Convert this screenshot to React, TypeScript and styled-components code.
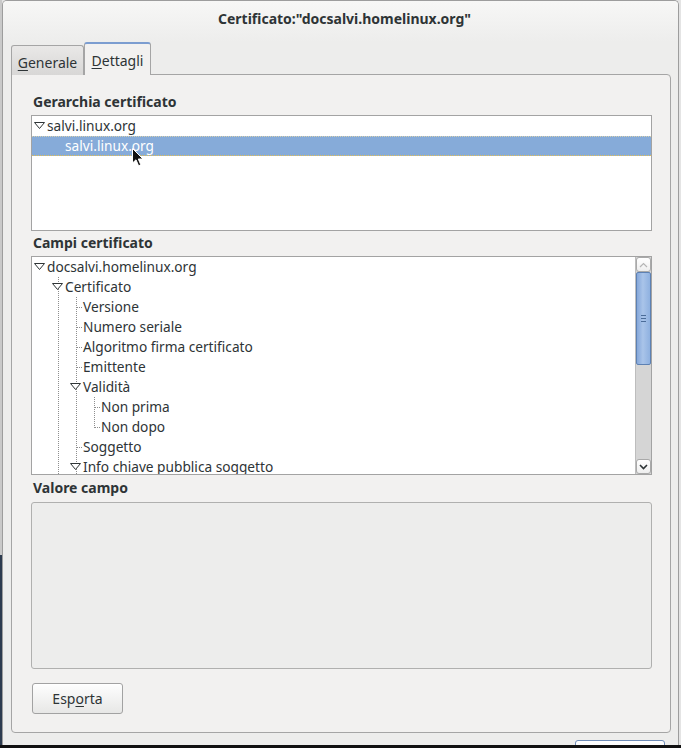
import React from 'react'
import styled, { createGlobalStyle, css } from 'styled-components'

interface TreeNode {
  label: string
  depth: number
  expandable?: boolean
  selected?: boolean
  // for each ancestor cell: does a sibling line run through it
  guides: boolean[]
  // own connector: none (top level), full (more siblings below), half (last child)
  own: 'none' | 'full' | 'half'
}

const hierarchy: TreeNode[] = [
  { label: 'salvi.linux.org', depth: 0, expandable: true, guides: [], own: 'none' },
  { label: 'salvi.linux.org', depth: 1, selected: true, guides: [false], own: 'half' },
]

const fields: TreeNode[] = [
  { label: 'docsalvi.homelinux.org', depth: 0, expandable: true, guides: [], own: 'none' },
  { label: 'Certificato', depth: 1, expandable: true, guides: [false], own: 'full' },
  { label: 'Versione', depth: 2, guides: [false, true], own: 'full' },
  { label: 'Numero seriale', depth: 2, guides: [false, true], own: 'full' },
  { label: 'Algoritmo firma certificato', depth: 2, guides: [false, true], own: 'full' },
  { label: 'Emittente', depth: 2, guides: [false, true], own: 'full' },
  { label: 'Validità', depth: 2, expandable: true, guides: [false, true], own: 'full' },
  { label: 'Non prima', depth: 3, guides: [false, true, true], own: 'full' },
  { label: 'Non dopo', depth: 3, guides: [false, true, true], own: 'half' },
  { label: 'Soggetto', depth: 2, guides: [false, true], own: 'full' },
  { label: 'Info chiave pubblica soggetto', depth: 2, expandable: true, guides: [false, true], own: 'full' },
]

export default function App(): JSX.Element {
  return (
    <Screen>
      <GlobalStyle />
      <Window>
        <TitleBar>Certificato:"docsalvi.homelinux.org"</TitleBar>
        <Content>
          <TabStrip>
            <Tab $width={73}>
              <U>G</U>enerale
            </Tab>
            <Tab $width={67} $active>
              <U>D</U>ettagli
            </Tab>
          </TabStrip>
          <Panel>
            <SectionLabel>Gerarchia certificato</SectionLabel>
            <TreeFrame $height={116}>
              <TreeBody>
                {hierarchy.map((node, i) => (
                  <TreeRow key={`h-${i}`} node={node} lines={false} />
                ))}
              </TreeBody>
              <Pointer viewBox='0 0 12 19' width='12' height='19'>
                <path d='M0.5 0.5 L0.5 15 L4 11.8 L6.6 17.8 L8.8 16.8 L6.3 11 L11 11 Z' fill='#111' stroke='#fff' strokeWidth='1' />
              </Pointer>
            </TreeFrame>

            <SectionLabel $top={4}>Campi certificato</SectionLabel>
            <TreeFrame $height={219}>
              <TreeBody>
                {fields.map((node, i) => (
                  <TreeRow key={`f-${i}`} node={node} lines />
                ))}
              </TreeBody>
              <Scrollbar>
                <StepButton>
                  <svg width='9' height='6' viewBox='0 0 9 6'>
                    <path d='M1 5 L4.5 1.5 L8 5' fill='none' stroke='#b5b5b5' strokeWidth='1.2' />
                  </svg>
                </StepButton>
                <Thumb>
                  <Grip />
                  <Grip />
                  <Grip />
                </Thumb>
                <Trough />
                <StepButton>
                  <svg width='9' height='6' viewBox='0 0 9 6'>
                    <path d='M1 1 L4.5 4.5 L8 1' fill='none' stroke='#2e3436' strokeWidth='1.6' />
                  </svg>
                </StepButton>
              </Scrollbar>
            </TreeFrame>

            <SectionLabel $top={5} $bottom={6}>
              Valore campo
            </SectionLabel>
            <ValueBox />

            <ExportButton>
              Esp<U>o</U>rta
            </ExportButton>
          </Panel>
          <ActionArea>
            <CloseButton>Chiudi</CloseButton>
          </ActionArea>
        </Content>
      </Window>
      <ScreenEdge />
    </Screen>
  )
}

function TreeRow({ node, lines }: { node: TreeNode; lines: boolean }): JSX.Element {
  return (
    <Row $selected={node.selected}>
      {node.guides.map((on, i) => (
        <GuideCell key={i} width='18' height='20' viewBox='0 0 18 20'>
          {lines && on && <DotLine x1='8.5' y1='0' x2='8.5' y2='20' />}
        </GuideCell>
      ))}
      <GuideCell width='15' height='20' viewBox='0 0 15 20'>
        {lines && node.own !== 'none' && <DotLine x1='8.5' y1='0' x2='8.5' y2={node.own === 'full' ? '20' : '10.5'} />}
        {lines && node.own !== 'none' && !node.expandable && <DotLine x1='8.5' y1='10.5' x2='15' y2='10.5' />}
        {node.expandable && (
          <polygon points='2.5,6.5 12.5,6.5 7.5,12.5' fill='#fff' stroke='#2e3436' strokeWidth='1' strokeLinejoin='miter' />
        )}
      </GuideCell>
      <RowLabel>{node.label}</RowLabel>
    </Row>
  )
}

const GlobalStyle = createGlobalStyle`
  html, body {
    margin: 0;
    padding: 0;
  }
  body {
    font-family: 'Noto Sans', 'DejaVu Sans', sans-serif;
    font-size: 13.7px;
    color: #2e3436;
  }
`

const Screen = styled.div`
  width: 681px;
  height: 748px;
  overflow: hidden;
  display: flex;
  flex-direction: column;
  background:
    linear-gradient(to bottom, #c9c9c9 0, #c9c9c9 555px, #2d3b4f 555px) left top / 2px 100% no-repeat,
    #e4e4e4;
`

const Window = styled.div`
  flex: 1;
  min-height: 0;
  margin: 0 2px;
  border: 1px solid #9d9d9d;
  border-bottom: none;
  border-radius: 5px 5px 0 0;
  background: #ededec;
  display: flex;
  flex-direction: column;
  overflow: hidden;
`

const TitleBar = styled.div`
  height: 41px;
  flex-shrink: 0;
  box-sizing: border-box;
  padding: 0 0 6px 8px;
  display: flex;
  align-items: center;
  justify-content: center;
  background: linear-gradient(#f7f7f6, #ededec);
  font-weight: bold;
  font-size: 14px;
`

const Content = styled.div`
  display: flex;
  flex-direction: column;
  padding: 0 7px 0 8px;
`

const TabStrip = styled.div`
  height: 33px;
  margin-bottom: -1px;
  display: flex;
  align-items: flex-end;
`

const Tab = styled.div<{ $active?: boolean; $width: number }>`
  position: relative;
  z-index: ${p => (p.$active ? 1 : 0)};
  width: ${p => p.$width}px;
  height: ${p => (p.$active ? 33 : 30)}px;
  box-sizing: border-box;
  padding-top: ${p => (p.$active ? 1 : 3)}px;
  display: flex;
  align-items: center;
  justify-content: center;
  border: 1px solid #a5a5a5;
  border-top: ${p => (p.$active ? '2px solid #7c9dd0' : '1px solid #a5a5a5')};
  border-bottom: none;
  border-radius: 3px 3px 0 0;
  background: ${p => (p.$active ? '#f2f1f0' : 'linear-gradient(#e9e8e7, #d8d7d6)')};
  font-size: 14px;
`

const U = styled.span`
  text-decoration: underline;
  text-underline-offset: 2px;
`

const Panel = styled.div`
  border: 1px solid #a5a5a5;
  border-radius: 0 4px 4px 4px;
  background: #f2f1f0;
  padding: 19px 18px 18px 19px;
  display: flex;
  flex-direction: column;
`

const SectionLabel = styled.div<{ $top?: number; $bottom?: number }>`
  height: 16px;
  line-height: 16px;
  margin: ${p => p.$top ?? 0}px 0 ${p => p.$bottom ?? 5}px 2px;
  font-weight: bold;
  font-size: 14px;
  white-space: nowrap;
`

const TreeFrame = styled.div<{ $height: number }>`
  position: relative;
  height: ${p => p.$height}px;
  box-sizing: border-box;
  border: 1px solid #a3a3a3;
  background: #fff;
  display: flex;
  overflow: hidden;
`

const TreeBody = styled.div`
  flex: 1;
  min-width: 0;
  overflow: hidden;
`

const Row = styled.div<{ $selected?: boolean }>`
  height: 20px;
  box-sizing: border-box;
  display: flex;
  align-items: center;
  white-space: nowrap;
  color: #2e3436;
  ${p =>
    p.$selected &&
    css`
      background: #86abd9;
      color: #ffffff;
      border-top: 1px dotted #d6cfae;
      border-bottom: 1px dotted #e4bf55;
    `}
`

const GuideCell = styled.svg`
  flex-shrink: 0;
  display: block;
`

const DotLine = styled.line`
  stroke: #8e8e8e;
  stroke-width: 1;
  stroke-dasharray: 1 1;
  shape-rendering: crispEdges;
`

const RowLabel = styled.span`
  line-height: 20px;
`

const Pointer = styled.svg`
  position: absolute;
  left: 100px;
  top: 32px;
`

const Scrollbar = styled.div`
  width: 16px;
  flex-shrink: 0;
  display: flex;
  flex-direction: column;
  background: #d5d5d5;
  border-left: 1px solid #bdbdbd;
  box-sizing: border-box;
`

const StepButton = styled.div`
  height: 15px;
  flex-shrink: 0;
  box-sizing: border-box;
  border: 1px solid #a9a9a9;
  border-radius: 3px;
  background: linear-gradient(#ffffff, #eeeeee);
  display: flex;
  align-items: center;
  justify-content: center;
`

const Thumb = styled.div`
  height: 93px;
  flex-shrink: 0;
  box-sizing: border-box;
  border: 1px solid #5d81b3;
  border-radius: 2px;
  background: linear-gradient(to right, #86a8da, #a9c4e9 45%, #8fb1e0);
  display: flex;
  flex-direction: column;
  align-items: center;
  justify-content: center;
  gap: 2px;
`

const Grip = styled.div`
  width: 5px;
  height: 1px;
  background: #4b6c98;
`

const Trough = styled.div`
  flex: 1;
`

const ValueBox = styled.div`
  height: 167px;
  box-sizing: border-box;
  border: 1px solid #b0b0af;
  border-radius: 3px;
  background: #ededec;
`

const ExportButton = styled.button`
  align-self: flex-start;
  margin: 14px 0 0 1px;
  width: 91px;
  height: 31px;
  padding: 0;
  border: 1px solid #a2a2a2;
  border-radius: 3px;
  background: linear-gradient(#fefefe, #e7e7e6);
  box-shadow: inset 0 1px #ffffff;
  font-family: inherit;
  font-size: 14px;
  color: #2e3436;
`

const ActionArea = styled.div`
  display: flex;
  justify-content: flex-end;
  padding: 7px 6px 0 0;
`

const CloseButton = styled.button`
  width: 90px;
  height: 31px;
  padding: 0;
  border: 1px solid #6f8cb7;
  border-radius: 3px;
  background: linear-gradient(#ffffff, #ececec);
  font-family: inherit;
  font-size: 14px;
  color: #2e3436;
`

const ScreenEdge = styled.div`
  height: 3px;
  flex-shrink: 0;
  background: #111;
`
